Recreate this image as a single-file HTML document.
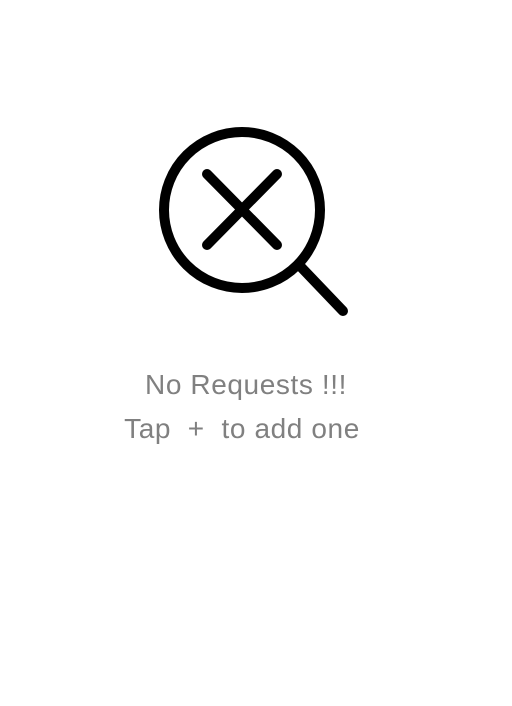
<!DOCTYPE html>
<html><head><style>
html,body{margin:0;padding:0;background:#fff;width:512px;height:706px;overflow:hidden;}
.t{position:absolute;left:0;width:484px;text-align:center;font-family:"Comic Sans MS","Liberation Sans",sans-serif;color:#808080;font-size:28px;white-space:pre;letter-spacing:0.6px;}
</style></head><body>
<svg width="512" height="706" style="position:absolute;left:0;top:0">
<g fill="none" stroke="#000" stroke-width="10" stroke-linecap="round">
<circle cx="242" cy="210" r="78"/>
<line x1="207" y1="174" x2="277" y2="245"/>
<line x1="277" y1="174" x2="207" y2="245"/>
<line x1="300" y1="266" x2="343" y2="311"/>
</g>
</svg>
<div class="t" style="top:369px;left:4px">No Requests !!!</div>
<div class="t" style="top:413px">Tap  +  to add one</div>
</body></html>
